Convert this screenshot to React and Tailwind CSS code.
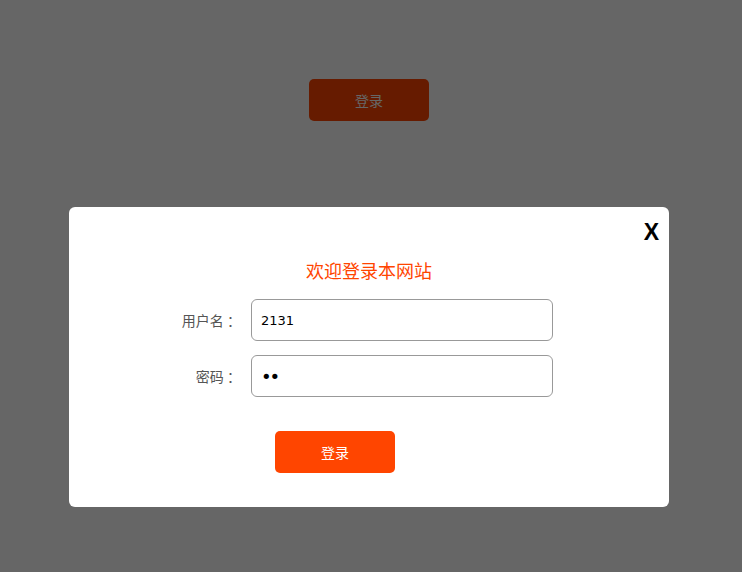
export default function App() {
  return (
    <div className="relative w-[742px] h-[572px] bg-white overflow-hidden" style={{ fontFamily: '"Noto Sans CJK SC", "Noto Sans", sans-serif' }}>
      <div className="pt-[79px] pl-[309px]">
        <button className="w-[120px] h-[42px] rounded-[5px] bg-[#ff4500] text-white text-[14px]">登录</button>
      </div>

      <div className="absolute inset-0 bg-black/60" />

      <div className="absolute left-[69px] top-[207px] w-[600px] h-[300px] bg-white rounded-[6px]">
        <span className="absolute right-[10px] top-[12px] text-[23px] leading-[26px] font-bold text-black" style={{ fontFamily: '"Liberation Sans", Arial, sans-serif' }}>X</span>

        <h2 className="pt-[50px] text-center text-[18px] leading-[26px] text-[#ff4500] font-normal">欢迎登录本网站</h2>

        <div className="mt-[16px] flex flex-col gap-[14px]">
          <div className="flex items-center">
            <label className="w-[172px] text-right text-[14px] text-[#555]">用户名 ：</label>
            <input
              readOnly
              defaultValue="2131"
              className="ml-[10px] w-[302px] h-[42px] rounded-[6px] border border-[#999] px-[9px] text-[13px] text-black outline-none"
              style={{ fontFamily: '"DejaVu Sans", sans-serif' }}
            />
          </div>
          <div className="flex items-center">
            <label className="w-[172px] text-right text-[14px] text-[#555]">密码 ：</label>
            <input
              readOnly
              type="password"
              defaultValue="12"
              className="ml-[10px] w-[302px] h-[42px] rounded-[6px] border border-[#999] px-[9px] text-[18px] tracking-[-2px] text-black outline-none"
              style={{ fontFamily: '"DejaVu Sans", sans-serif' }}
            />
          </div>
        </div>

        <button className="mt-[34px] ml-[206px] w-[120px] h-[42px] rounded-[5px] bg-[#ff4500] text-white text-[14px]">登录</button>
      </div>
    </div>
  );
}
